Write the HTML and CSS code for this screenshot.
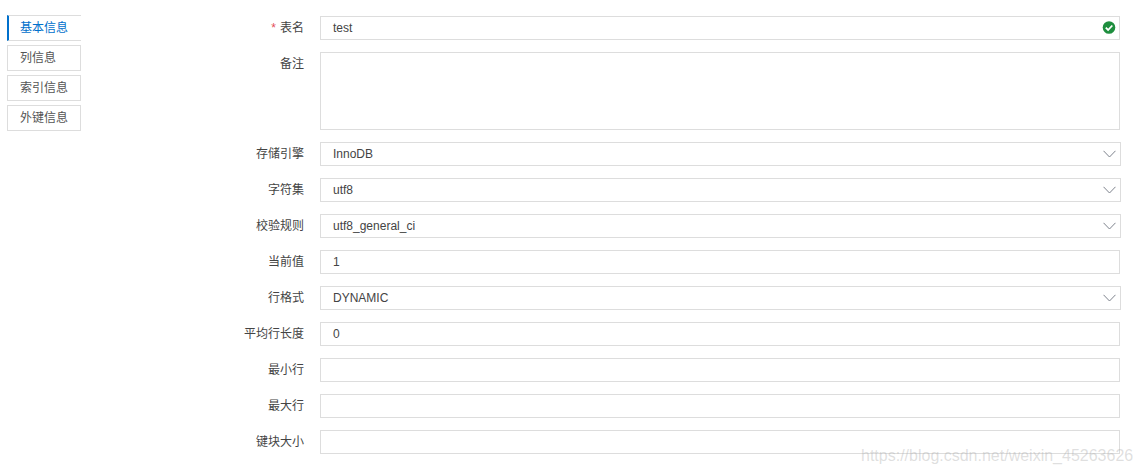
FILE: index.html
```html
<!DOCTYPE html>
<html>
<head>
    <meta charset="utf-8">
    <title>基本信息</title>
    <link rel="stylesheet" href="styles.css">
</head>
<body>
    <div class="parent">
        <div class="tabs">
            <div class="tab active">基本信息</div>
            <div class="tab">列信息</div>
            <div class="tab">索引信息</div>
            <div class="tab">外键信息</div>
        </div>
        <div class="form">
            <div class="label"><span class="star">*</span>表名</div>
            <div class="field">test
                <svg class="check" width="14" height="14" viewBox="0 0 14 14"><circle cx="7" cy="6.500" r="6.300" fill="#1e8e3e"/><path d="M3.800 6.700 6.100 9 10.300 4.500" fill="none" stroke="#fff" stroke-width="1.800"/></svg>
            </div>

            <div class="label label-top">备注</div>
            <div class="field area"></div>

            <div class="label">存储引擎</div>
            <div class="field select">InnoDB
                <svg class="arrow" width="13" height="8" viewBox="0 0 13 8"><path d="M.5.8 6.5 7 12.500.8" fill="none" stroke="#7d828c"/></svg>
            </div>

            <div class="label">字符集</div>
            <div class="field select">utf8
                <svg class="arrow" width="13" height="8" viewBox="0 0 13 8"><path d="M.5.8 6.5 7 12.500.8" fill="none" stroke="#7d828c"/></svg>
            </div>

            <div class="label">校验规则</div>
            <div class="field select">utf8_general_ci
                <svg class="arrow" width="13" height="8" viewBox="0 0 13 8"><path d="M.5.8 6.5 7 12.500.8" fill="none" stroke="#7d828c"/></svg>
            </div>

            <div class="label">当前值</div>
            <div class="field">1</div>

            <div class="label">行格式</div>
            <div class="field select">DYNAMIC
                <svg class="arrow" width="13" height="8" viewBox="0 0 13 8"><path d="M.5.8 6.5 7 12.500.8" fill="none" stroke="#7d828c"/></svg>
            </div>

            <div class="label">平均行长度</div>
            <div class="field">0</div>

            <div class="label">最小行</div>
            <div class="field"></div>

            <div class="label">最大行</div>
            <div class="field"></div>

            <div class="label">键块大小</div>
            <div class="field"></div>
        </div>
    </div>
    <div class="watermark">https://blog.csdn.net/weixin_45263626</div>
</body>
</html>
```

FILE: styles.css
```css
* {
    margin: 0;
    padding: 0;
    box-sizing: border-box;
}

html, body {
    width: 100%;
    height: 100%;
    overflow: hidden;
}

body {
    position: relative;
    background: white;
    color: #333;
    font-family: "Liberation Sans", "Noto Sans CJK SC", sans-serif;
    font-size: 12px;
}

.parent {
    display: flex;
    align-items: flex-start;
    padding: 15px 22px 0 7px;
}

.tabs {
    width: 74px;
    display: flex;
    flex-direction: column;
    gap: 4px;
}

.tab {
    height: 26px;
    line-height: 24px;
    padding-left: 12px;
    border: 1px solid #ddd;
    color: #555;
}

.tab.active {
    border-left: 2px solid #0070cc;
    border-right: none;
    padding-left: 11px;
    color: #0070cc;
}

.form {
    flex: 1;
    margin-left: 139px;
    padding-top: 1px;
    display: grid;
    grid-template-columns: 84px 1fr;
    column-gap: 16px;
    row-gap: 12px;
}

.label {
    height: 24px;
    line-height: 24px;
    text-align: right;
    color: #444;
}

.label-top {
    line-height: 24px;
}

.star {
    color: #e34d59;
    margin-right: 4px;
}

.field {
    position: relative;
    height: 24px;
    line-height: 22px;
    padding-left: 12px;
    border: 1px solid #ddd;
    color: #444;
    background: white;
}

.area {
    height: 78px;
}

.select {
    margin-right: -1px;
}

.check {
    position: absolute;
    right: 3px;
    top: 4px;
}

.arrow {
    position: absolute;
    right: 4px;
    top: 7px;
}

.watermark {
    position: absolute;
    left: 861px;
    top: 447px;
    font-size: 16px;
    line-height: 18px;
    color: rgba(170, 170, 170, 0.38);
    white-space: nowrap;
}
```
